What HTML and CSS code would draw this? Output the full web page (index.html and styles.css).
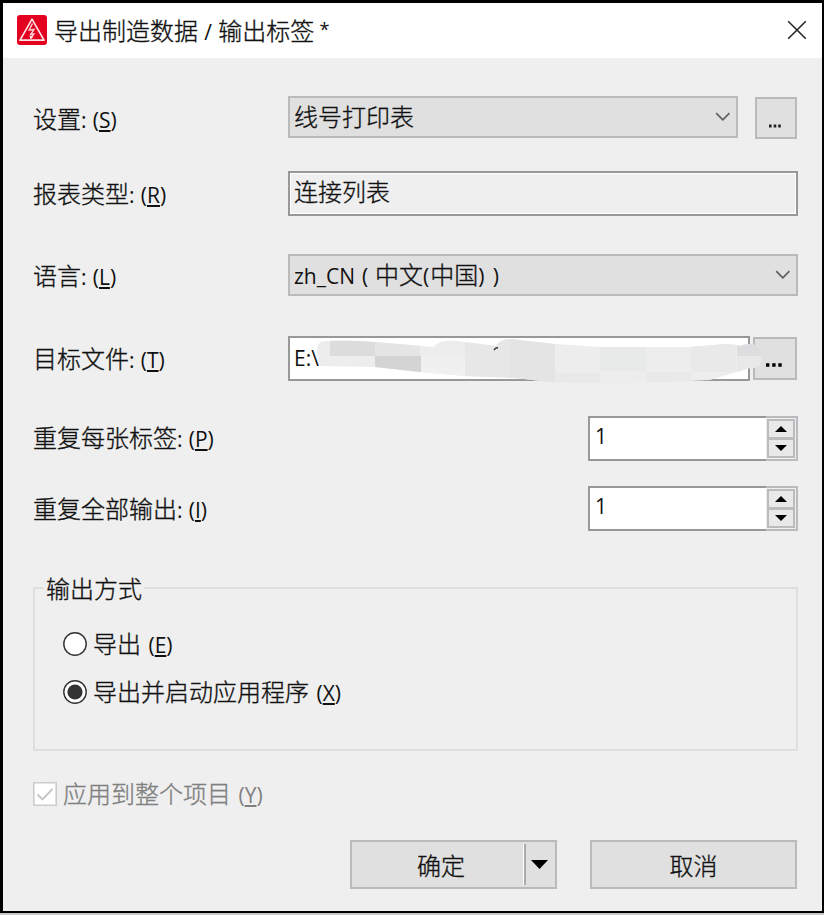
FILE: index.html
```html
<!DOCTYPE html>
<html lang="zh-CN">
<head>
<meta charset="utf-8">
<title>导出制造数据 / 输出标签</title>
<link rel="stylesheet" href="styles.css">
</head>
<body>
<div class="window">
  <header class="titlebar">
    <svg class="logo" width="30" height="30" viewBox="0 0 30 30"><rect width="30" height="30" rx="3" fill="#e4001f"/><path d="M15 4.200 27 25.200H3Z" fill="none" stroke="#fff" stroke-opacity=".88" stroke-width="1.7" stroke-linejoin="round"/><path d="M15.500 8.500 12.200 15l4.800-.6-3.200 5 3-.4-3.300 4.500" fill="none" stroke="#fff" stroke-opacity=".8" stroke-width="1.5"/><path d="m12.600 20.300.6 3.600 3.200-2Z" fill="#fff" fill-opacity=".8"/></svg>
    <h1 class="title">导出制造数据<span class="en"> / </span>输出标签<span class="en star"> *</span></h1>
    <svg class="close" width="20" height="20" viewBox="0 0 20 20"><path d="m1.200 1.200 17.600 17.600M18.800 1.200 1.200 18.800" stroke="#222" stroke-width="1.500"/></svg>
  </header>
  <main class="form">
    <div class="row row-setting">
      <label class="label">设置<span class="en">: (<u>S</u>)</span></label>
      <div class="select"><span>线号打印表</span><svg class="chev" width="16" height="10" viewBox="0 0 16 10"><path d="m1.200 1.200 6.600 6.600 6.600-6.600" fill="none" stroke="#606060" stroke-width="1.700"/></svg></div>
      <button class="more more-small"><svg width="14" height="4" viewBox="0 0 14 4"><path d="M1 .5h2.600v3H1zM5.700.5h2.600v3H5.700zM10.200.5h2.600v3h-2.600z" fill="#222"/></svg></button>
    </div>
    <div class="row row-type">
      <label class="label">报表类型<span class="en">: (<u>R</u>)</span></label>
      <div class="readonly">连接列表</div>
    </div>
    <div class="row row-lang">
      <label class="label">语言<span class="en">: (<u>L</u>)</span></label>
      <div class="select"><span><span class="en lang">zh_CN ( </span>中文<span class="en paren">(</span>中国<span class="en paren">) )</span></span><svg class="chev" width="16" height="10" viewBox="0 0 16 10"><path d="m1.200 1.200 6.600 6.600 6.600-6.600" fill="none" stroke="#606060" stroke-width="1.700"/></svg></div>
    </div>
    <div class="row row-file">
      <label class="label">目标文件<span class="en">: (<u>T</u>)</span></label>
      <div class="input"><span class="en">E:\</span></div>
      <button class="more more-big"><svg width="16" height="4" viewBox="0 0 16 4"><path d="M0 .3h3.400v3.400H0zM6.200.3h3.400v3.400H6.200zM12.300.3h3.400v3.400h-3.400z" fill="#000"/></svg></button>
      <svg class="smudge" width="450" height="50" viewBox="315 336 450 50">
        <defs><clipPath id="stroke"><path d="M320 342C330 340 355 341 375 342L434 347C438 341 447 340 456 341L496 346C500 339 510 338 519 340L555 344 600 347H690L725 344Q735 344 740 346 750 342 757 346 762 350 761 362 759 368 750 368L710 380 670 382 600 383 550 382 515 378 465 376 420 372 375 367 320 366Q314 350 320 342Z"/></clipPath></defs>
        <g clip-path="url(#stroke)">
          <path fill="#ededee" d="M310 336h460v50H310z"/>
          <path fill="#dcdcdc" d="M330 338h45v18h-45z"/>
          <path fill="#e5e5e5" d="M375 338h45v18h-45z"/>
          <path fill="#d4d4d4" d="M375 356h46v18h-46z"/>
          <path fill="#f0f0f1" d="M421 356h44v22h-44z"/>
          <path fill="#e7e7e8" d="M465 338h45v48h-45z"/>
          <path fill="#e4e4e4" d="M510 338h45v46h-45z"/>
          <path fill="#ededee" d="M555 356h45v17h-45z"/>
          <path fill="#e8eaea" d="M600 347h46v24h-46z"/>
          <path fill="#ededed" d="M646 355h45v17h-45z"/>
          <path fill="#e9e9e9" d="M555 373h45v13h-45zM646 372h45v14h-45zM691 338h45v34h-45z"/>
          <path fill="#dddddf" d="M737 338h28v18h-28z"/>
          <path fill="#e8e8e9" d="M737 356h28v20h-28z"/>
        </g>
        <path d="M494 350q2-3 4-2" fill="none" stroke="#333" stroke-width="1.400"/>
      </svg>
    </div>
    <div class="row row-spin">
      <label class="label">重复每张标签<span class="en">: (<u>P</u>)</span></label>
      <div class="spin"><div class="value en">1</div><div class="steps"><i class="step"><svg width="12" height="6" viewBox="0 0 12 6"><path d="M0 6 6 0l6 6z"/></svg></i><i class="step"><svg width="12" height="6" viewBox="0 0 12 6"><path d="m0 0 6 6 6-6z"/></svg></i></div></div>
    </div>
    <div class="row row-spin row-spin-last">
      <label class="label">重复全部输出<span class="en">: (<u>I</u>)</span></label>
      <div class="spin"><div class="value en">1</div><div class="steps"><i class="step"><svg width="12" height="6" viewBox="0 0 12 6"><path d="M0 6 6 0l6 6z"/></svg></i><i class="step"><svg width="12" height="6" viewBox="0 0 12 6"><path d="m0 0 6 6 6-6z"/></svg></i></div></div>
    </div>
    <fieldset class="group">
      <legend>输出方式</legend>
      <div class="radio"><svg width="24" height="24" viewBox="0 0 24 24"><circle cx="12" cy="12" r="11.200" fill="#fff" stroke="#333" stroke-width="1.400"/></svg><span>导出<span class="en wide"> (<u>E</u>)</span></span></div>
      <div class="radio"><svg width="24" height="24" viewBox="0 0 24 24"><circle cx="12" cy="12" r="11.200" fill="#fff" stroke="#333" stroke-width="1.400"/><circle cx="12" cy="12" r="7.600" fill="#333"/></svg><span>导出并启动应用程序<span class="en wide"> (<u>X</u>)</span></span></div>
    </fieldset>
    <div class="check"><svg width="24" height="24" viewBox="0 0 24 24"><path d="M.8.8h22.400v22.400H.8z" fill="#fff" stroke="#ccc" stroke-width="1.600"/><path d="m4.500 12.500 5 5L19.500 7" fill="none" stroke="#c6c6c6" stroke-width="1.900"/></svg><span>应用到整个项目<span class="en wide"> (<u>Y</u>)</span></span></div>
    <div class="actions">
      <button class="btn split"><span class="main">确定</span><span class="drop"><svg width="17" height="9" viewBox="0 0 17 9"><path d="M0 0h17L8.500 9z"/></svg></span></button>
      <button class="btn">取消</button>
    </div>
  </main>
</div>
</body>
</html>
```
FILE: styles.css
```css
* { box-sizing: border-box; }
body {
  margin: 0;
  background: #c8c8c8;
  color: #111;
  font: 24px/30px "Noto Sans CJK SC", sans-serif;
  font-weight: 300;
  -webkit-text-stroke: .35px;
}
.window {
  width: 824px;
  height: 913px;
  border: solid #000;
  border-width: 3px 2px 2px 3px;
  background: #efefef;
}
.en {
  font-family: "Open Sans", "Noto Sans", sans-serif;
  font-size: 21px;
  font-weight: 400;
  line-height: 1;
  white-space: pre;
  word-spacing: .8px;
  -webkit-text-stroke: 0;
}
.en.wide { word-spacing: 2px; }
.en.lang { word-spacing: 1.5px; }
.en.paren { letter-spacing: 1px; }
.en.star { font-size: 18px; word-spacing: .5px; vertical-align: 4px; }
u { text-decoration-thickness: 1.5px; text-underline-offset: 2px; text-decoration-skip-ink: none; }
button { font: inherit; color: inherit; padding: 0; margin: 0; border-radius: 0; }
.titlebar {
  display: flex;
  height: 55px;
  padding: 12px 14px 0 14px;
  background: #fff;
}
.title { margin: 0 auto 0 7px; font-size: 24px; line-height: 30px; font-weight: inherit; }
.close { margin: 5px 1px 0 0; }
.form { padding: 38px 24px 0 30px; }
.row { display: flex; position: relative; }
.label { width: 255px; line-height: 42px; white-space: nowrap; }
.row-setting { height: 42px; margin-bottom: 33px; }
.row-setting .label { line-height: 44px; }
.row-type { height: 45px; margin-bottom: 38px; }
.row-type .label { line-height: 44px; }
.row-lang { height: 42px; margin-bottom: 40px; }
.row-lang .label { line-height: 42px; }
.row-file { height: 45px; margin-bottom: 35px; }
.row-file .label { line-height: 43px; }
.row-spin { height: 45px; margin-bottom: 25px; }
.row-spin-last { margin-bottom: 42px; }
.row-spin-last .label { line-height: 43px; }
.select {
  display: flex;
  flex: 1;
  align-items: center;
  justify-content: space-between;
  height: 42px;
  padding: 0 5px 0 4px;
  border: 2px solid #bababa;
  background: #e0e0e0;
}
.select > span { margin-top: -2px; }
.more {
  display: flex;
  justify-content: center;
  width: 42px;
  height: 42px;
  padding-top: 25px;
  border: 2px solid #bababa;
  background: #e0e0e0;
}
.more-small { margin: 1px 1px 0 17px; padding: 25px 2px 0 0; }
.more-big { margin: 1px 1px 0 3px; width: 44px; padding: 24px 2px 0 0; height: 43px; }
.readonly, .input {
  flex: 1;
  border: 2px solid #989898;
  padding-left: 4px;
  line-height: 36px;
}
.readonly { box-shadow: inset 0 0 0 1px #fff; }
.input { background: #fff; }
.smudge { position: absolute; left: 282px; top: 0; }
.spin {
  display: flex;
  width: 210px;
  margin-left: auto;
  background: #efefef;
}
.value {
  width: 178px;
  border: 2px solid #989898;
  border-right: 0;
  padding-left: 5px;
  line-height: 37px;
  background: #fff;
}
.steps {
  display: flex;
  flex: 1;
  flex-direction: column;
  padding: 1px 1px 1px 1px;
  border: 2px solid #b9bbbe;
  border-left: 0;
}
.step {
  display: flex;
  flex: 1;
  align-items: center;
  justify-content: center;
  border: 2px solid #bcbcbc;
  background: #e9e9e9;
}
.step + .step { border-top-width: 1px; }
.group {
  height: 178px;
  margin: 0;
  padding: 26px 0 0 28px;
  border: 2px solid #dfdfdf;
}
.group legend { margin-left: -19px; padding: 0 2px; line-height: 30px; }
.radio, .check { display: flex; align-items: center; gap: 6px; height: 30px; }
.radio > span, .check > span { margin-top: -2px; }
.radio { margin-bottom: 18px; }
.check { margin-top: 28px; color: #808080; }
.actions { display: flex; justify-content: flex-end; gap: 33px; margin: 31px 1px 0 0; }
.btn { width: 207px; height: 49px; border: 2px solid #bababa; background: #e0e0e0; line-height: 42px; }
.split { display: flex; align-items: center; }
.main { flex: 1; padding-left: 6px; }
.drop {
  display: flex;
  align-items: center;
  width: 31px;
  height: 41px;
  padding-left: 5px;
  border-left: 2px solid #aaa;
  box-shadow: -1px 0 #fff;
}
```
